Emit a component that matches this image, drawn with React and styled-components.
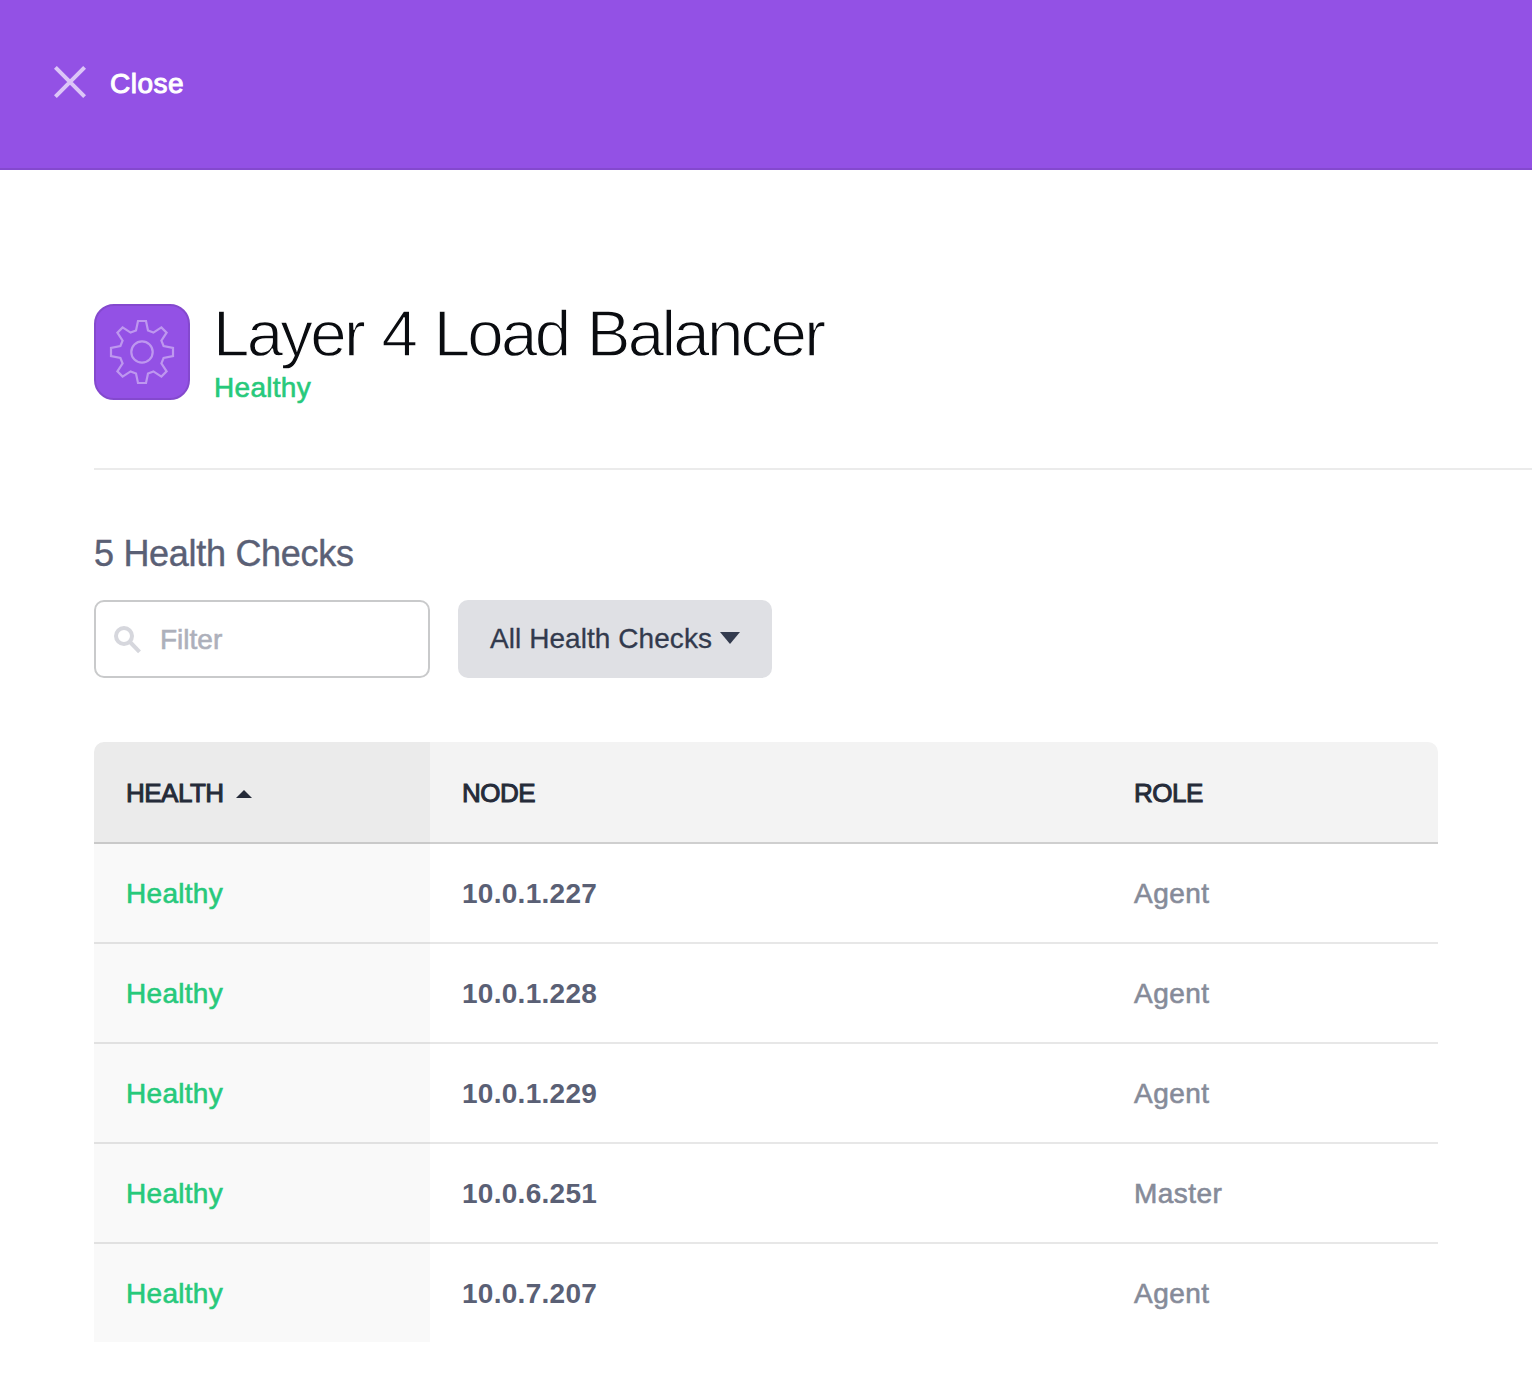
import React from "react";
import styled, { createGlobalStyle } from "styled-components";

const GlobalStyle = createGlobalStyle`
  * { box-sizing: border-box; }
  body {
    margin: 0;
    background: #fff;
    font-family: "Liberation Sans", Arial, sans-serif;
    font-size: 28px;
    -webkit-font-smoothing: antialiased;
  }
`;

const Page = styled.div`
  min-height: 1384px;
  overflow: hidden;
`;

const TopBar = styled.header`
  height: 170px;
  padding: 0 54px 4px;
  display: flex;
  align-items: center;
  background: #9351e5;
  border-bottom: 2px solid #8449ce;
`;

const CloseButton = styled.button`
  display: flex;
  align-items: center;
  gap: 24px;
  padding: 0;
  border: 0;
  background: none;
  color: #fff;
  font: inherit;
`;

const Label = styled.span`
  line-height: 32px;
  padding-top: ${(p) => p.$drop || 0}px;
  padding-bottom: ${(p) => p.$lift || 0}px;
  letter-spacing: ${(p) => p.$spacing || 0}px;
  -webkit-text-stroke: ${(p) => p.$stroke || 0}px currentColor;
`;

const Content = styled.main`
  padding: 134px 0 0 94px;
`;

const ServiceHeader = styled.section`
  display: flex;
  gap: 24px;
  height: 166px;
  border-bottom: 2px solid #ebebeb;
`;

const ServiceIcon = styled.div`
  display: flex;
  width: 96px;
  height: 96px;
  align-items: center;
  justify-content: center;
  border: 2px solid #8449ce;
  border-radius: 20px;
  background: #9351e5;
`;

const Title = styled.h1`
  margin: 0 0 0 -1px;
  height: 68px;
  line-height: 60px;
  font-size: 65.5px;
  font-weight: 400;
  letter-spacing: -2.75px;
  word-spacing: 3px;
  color: #0a0c10;
  -webkit-text-stroke: 1.3px #fff;
`;

const Status = styled.div`
  line-height: 32px;
  color: #27c97b;
  letter-spacing: 0.3px;
  -webkit-text-stroke: 0.6px currentColor;
`;

const SectionTitle = styled.h2`
  margin: 63px 0 25px;
  line-height: 42px;
  font-size: 36px;
  font-weight: 400;
  letter-spacing: -0.3px;
  color: #5a6075;
  -webkit-text-stroke: 0.4px currentColor;
`;

const Toolbar = styled.div`
  display: flex;
  gap: 28px;
`;

const FilterField = styled.label`
  display: flex;
  align-items: center;
  gap: 18px;
  width: 336px;
  height: 78px;
  padding: 2px 18px 0;
  border: 2px solid #c9cacb;
  border-radius: 10px;
`;

const FilterInput = styled.input`
  width: 220px;
  padding: 0 0 1px;
  border: 0;
  outline: 0;
  background: none;
  font: inherit;
  &::placeholder {
    color: #adb0bb;
    opacity: 1;
    -webkit-text-stroke: 0.6px currentColor;
  }
`;

const Dropdown = styled.button`
  display: flex;
  align-items: center;
  gap: 8px;
  width: 314px;
  height: 78px;
  padding: 0 32px 2px;
  border: 0;
  border-radius: 10px;
  background: #dfe0e4;
  color: #323a4d;
  font: inherit;
  white-space: nowrap;
`;

const Table = styled.div`
  width: 1344px;
  margin-top: 64px;
  border-radius: 10px 10px 0 0;
  overflow: hidden;
`;

const Row = styled.div`
  display: grid;
  grid-template-columns: 336px 672px 336px;
  height: ${(p) => (p.$head ? 102 : 100)}px;
`;

const HeadCell = styled.div`
  display: flex;
  align-items: center;
  gap: 12px;
  padding: 3px 32px 0;
  font-size: 26px;
  color: #252b39;
  background: ${(p) => (p.$sorted ? "#ebebeb" : "#f3f3f3")};
  border-bottom: 2px solid ${(p) => (p.$sorted ? "#c9c9c9" : "#cfcfcf")};
`;

const Cell = styled.div`
  display: flex;
  align-items: center;
  padding: 2px 32px 0;
  color: ${(p) => p.$color};
  font-weight: ${(p) => (p.$bold ? 700 : 400)};
  background: ${(p) => (p.$sorted ? "#f9f9f9" : "#fff")};
  border-bottom: 2px solid ${(p) => (p.$sorted ? "#e1e1e1" : "#e7e7e7")};
  ${Row}:last-child & {
    height: 98px;
    border-bottom: 0;
  }
`;

const rows = [
  ["10.0.1.227", "Agent"],
  ["10.0.1.228", "Agent"],
  ["10.0.1.229", "Agent"],
  ["10.0.6.251", "Master"],
  ["10.0.7.207", "Agent"],
];

const CloseIcon = () => (
  <svg width="32" height="32" viewBox="0 0 32 32" fill="none" stroke="#dcc6f7" strokeWidth="4">
    <path d="M1.4 1.4 30.6 30.6M30.6 1.4 1.4 30.6" />
  </svg>
);

// One quarter of the gear outline, repeated at each right angle.
const gearQuarter = [
  [-4, -31],
  [4, -31],
  [6, -21.6],
  [11.4, -19.4],
  [19.4, -24.6],
  [24.6, -19.4],
  [19.4, -11.4],
  [21.6, -6],
];
const gearPoints = [0, 1, 2, 3]
  .flatMap((turn) =>
    gearQuarter.map(([x, y]) => [[x, y], [-y, x], [-x, -y], [y, -x]][turn].join(","))
  )
  .join(" ");

const GearIcon = () => (
  <svg width="66" height="66" viewBox="-33 -33 66 66" fill="none" stroke="#be97ef" strokeWidth="2.2">
    <polygon points={gearPoints} />
    <circle r="10.7" />
  </svg>
);

const SearchIcon = () => (
  <svg width="28" height="28" viewBox="0 0 28 28" fill="none" stroke="#d6d7dd">
    <circle cx="10" cy="10" r="8" strokeWidth="4" />
    <path d="M15.5 15.5 25.5 25.8" strokeWidth="4" />
  </svg>
);

export default function App() {
  return (
    <Page>
      <GlobalStyle />
      <TopBar>
        <CloseButton>
          <CloseIcon />
          <Label $stroke={1} $spacing={0.5} $drop={4}>Close</Label>
        </CloseButton>
      </TopBar>
      <Content>
        <ServiceHeader>
          <ServiceIcon><GearIcon /></ServiceIcon>
          <div>
            <Title>Layer 4 Load Balancer</Title>
            <Status>Healthy</Status>
          </div>
        </ServiceHeader>
        <SectionTitle>5 Health Checks</SectionTitle>
        <Toolbar>
          <FilterField>
            <SearchIcon />
            <FilterInput placeholder="Filter" />
          </FilterField>
          <Dropdown>
            <Label $stroke={0.3} $spacing={0.06} $drop={1}>All Health Checks</Label>
            <svg width="20" height="12" viewBox="0 0 20 12" fill="#323a4d"><path d="M0 0H20L10 12Z" /></svg>
          </Dropdown>
        </Toolbar>
        <Table>
          <Row $head>
            <HeadCell $sorted>
              <Label $stroke={1} $spacing={-0.5} $lift={2}>HEALTH</Label>
              <svg width="16" height="8" viewBox="0 0 16 8" fill="#252b39"><path d="M0 8H16L8 0Z" /></svg>
            </HeadCell>
            <HeadCell><Label $stroke={1} $spacing={-0.5} $lift={2}>NODE</Label></HeadCell>
            <HeadCell><Label $stroke={1} $spacing={-0.5} $lift={2}>ROLE</Label></HeadCell>
          </Row>
          {rows.map(([node, role]) => (
            <Row key={node}>
              <Cell $sorted $color="#27c97b"><Label $stroke={0.6} $spacing={0.3}>Healthy</Label></Cell>
              <Cell $bold $color="#5a6075"><Label $spacing={0.28}>{node}</Label></Cell>
              <Cell $color="#868b99"><Label $stroke={0.6} $spacing={0.45}>{role}</Label></Cell>
            </Row>
          ))}
        </Table>
      </Content>
    </Page>
  );
}
